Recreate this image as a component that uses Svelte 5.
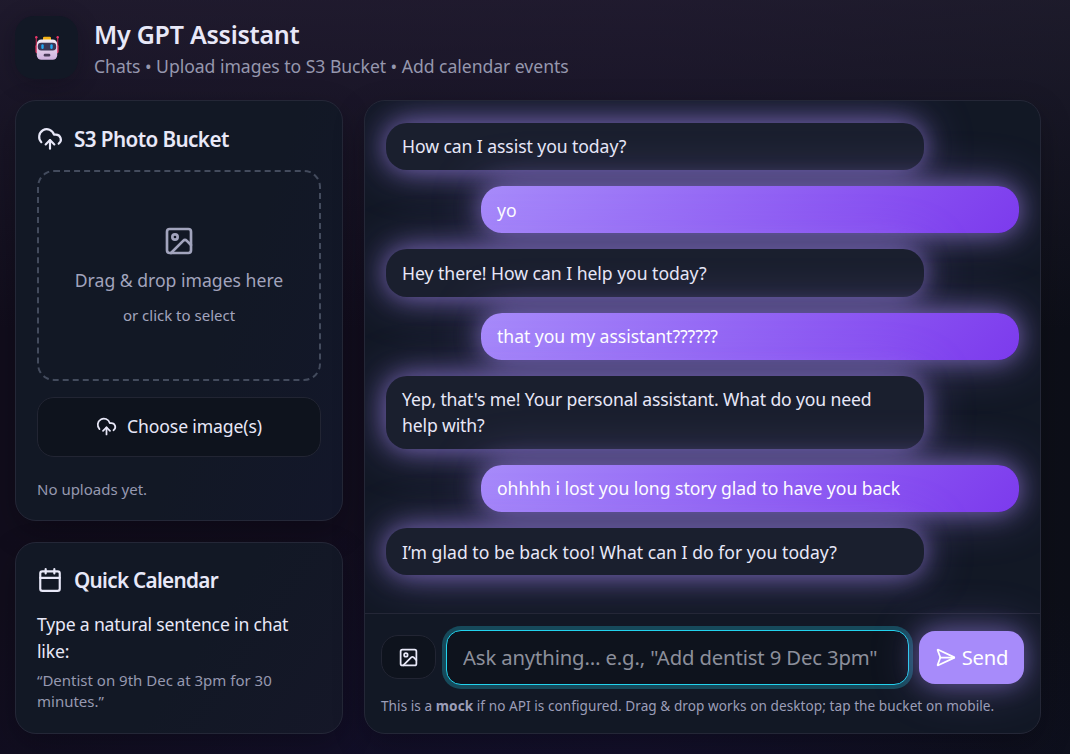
<script>
  const messages = [
    { from: 'bot', lines: ['How can I assist you today?'] },
    { from: 'me', lines: ['yo'] },
    { from: 'bot', lines: ['Hey there! How can I help you today?'] },
    { from: 'me', lines: ['that you my assistant??????'] },
    { from: 'bot', lines: ["Yep, that's me! Your personal assistant. What do you need", 'help with?'] },
    { from: 'me', lines: ['ohhhh i lost you long story glad to have you back'] },
    { from: 'bot', lines: ['I’m glad to be back too! What can I do for you today?'] }
  ];
</script>

{#snippet cloud(size)}
  <svg width={size} height={size} viewBox="0 0 24 24" class="icon">
    <path d="M12 13v8" /><path d="M4 14.899A7 7 0 1 1 15.71 8h1.79a4.5 4.5 0 0 1 2.5 8.242" /><path d="m8 17 4-4 4 4" />
  </svg>
{/snippet}
{#snippet picture(size)}
  <svg width={size} height={size} viewBox="0 0 24 24" class="icon">
    <rect width="18" height="18" x="3" y="3" rx="2" /><circle cx="9" cy="9" r="2" /><path d="m21 15-3.086-3.086a2 2 0 0 0-2.828 0L6 21" />
  </svg>
{/snippet}

<div class="app">
  <header>
    <div class="logo">
      <svg width="24" height="24" viewBox="0 0 24 24">
        <defs><linearGradient id="face" x1="0" y1="0" x2="0" y2="1"><stop offset="0" stop-color="#f2eaf4" /><stop offset="1" stop-color="#cdb0dd" /></linearGradient></defs>
        <path d="M1.3 1.5v10M22.7 1.5v10" stroke="#c42a55" stroke-width="1.1" />
        <circle cx="1.3" cy="1.3" r="1.2" fill="#e8386b" /><circle cx="22.7" cy="1.3" r="1.2" fill="#e8386b" />
        <rect x=".4" y="8.5" width="23.2" height="9" rx="2" fill="#d8345f" />
        <rect x="8" y=".8" width="8" height="4" rx="1.2" fill="#f5b316" />
        <rect x="1.8" y="3.5" width="20.4" height="20.3" rx="4.5" fill="url(#face)" />
        <rect x="2.8" y="6.8" width="18.4" height="7.6" rx="3.4" fill="#3b3655" />
        <rect x="6.3" y="8.3" width="2.4" height="4.6" rx="1.2" fill="#22a7f2" /><rect x="15.3" y="8.3" width="2.4" height="4.6" rx="1.2" fill="#22a7f2" />
        <rect x="8.7" y="17.8" width="6.6" height="2.6" rx="1.2" fill="#493c59" />
      </svg>
    </div>
    <div>
      <h1>My GPT Assistant</h1>
      <p class="sub">Chats • Upload images to S3 Bucket • Add calendar events</p>
    </div>
  </header>
  <main>
    <aside>
      <section class="card bucket">
        <h2>{@render cloud(26)}<span>S3 Photo Bucket</span></h2>
        <div class="drop">
          {@render picture(32)}
          <p class="d1">Drag &amp; drop images here</p>
          <p class="d2">or click to select</p>
        </div>
        <button class="choose">{@render cloud(21)}<span>Choose image(s)</span></button>
        <p class="none">No uploads yet.</p>
      </section>
      <section class="card cal">
        <h2>
          <svg width="26" height="26" viewBox="0 0 24 24" class="icon"><path d="M8 2v4M16 2v4M3 10h18" /><rect width="18" height="18" x="3" y="4" rx="2" /></svg>
          <span>Quick Calendar</span>
        </h2>
        <p class="c1">Type a natural sentence in chat<br />like:</p>
        <p class="c2">“Dentist on 9th Dec at 3pm for 30<br />minutes.”</p>
      </section>
    </aside>
    <section class="card chat">
      <div class="log">
        {#each messages as m}
          <div class="bubble {m.from}">{#each m.lines as line}<div>{line}</div>{/each}</div>
        {/each}
      </div>
      <footer>
        <div class="row">
          <button class="attach" aria-label="Attach">{@render picture(21)}</button>
          <input placeholder={'Ask anything… e.g., "Add dentist 9 Dec 3pm"'} />
          <button class="send">
            <svg width="21" height="21" viewBox="0 0 24 24" class="icon"><path d="M3.714 3.048a.498.498 0 0 0-.683.627l2.843 7.627a2 2 0 0 1 0 1.396l-2.842 7.627a.498.498 0 0 0 .682.627l18-8.5a.5.5 0 0 0 0-.904z" /><path d="M6 12h16" /></svg>
            <span>Send</span>
          </button>
        </div>
        <p class="note">This is a <b>mock</b> if no API is configured. Drag &amp; drop works on desktop; tap the bucket on mobile.</p>
      </footer>
    </section>
  </main>
</div>

<style>
  :global(body) { margin: 0; background: #0b0f17; }
  * { box-sizing: border-box; margin: 0; }
  .app {
    height: 754px; overflow: hidden; padding: 16px 29px 20px 15px;
    display: flex; flex-direction: column; gap: 22px;
    font-family: 'Noto Sans', 'Open Sans', sans-serif; color: #e8e8f8;
    background:
      radial-gradient(750px 300px at 50% 108%, rgba(18, 20, 70, .35), transparent 100%),
      linear-gradient(180deg, rgba(42, 36, 58, .55), rgba(34, 30, 50, .5) 100px, transparent 330px),
      linear-gradient(90deg, #110d1c, #130e20 60%, #0d0f18);
  }
  .icon { fill: none; stroke: currentColor; stroke-width: 2; stroke-linecap: round; stroke-linejoin: round; flex: none; display: block; }
  header { display: flex; gap: 16px; height: 62px; }
  .logo { width: 63px; height: 63px; border-radius: 19px; background: #121825; display: grid; place-items: center; box-shadow: 0 4px 22px rgba(10, 10, 20, .3); }
  h1 { font-size: 25px; font-weight: 650; line-height: 36px; letter-spacing: -.25px; white-space: nowrap; }
  .sub { font-size: 17.6px; line-height: 26px; margin-top: 1px; color: #9697ae; white-space: nowrap; letter-spacing: -.04px; }
  main { flex: 1; display: grid; grid-template-columns: 328px 1fr; gap: 21px; min-height: 0; }
  aside { display: flex; flex-direction: column; gap: 21px; }
  .card { border: 1px solid #242737; border-radius: 21px; background: #121825; box-shadow: 0 11px 32px rgba(0, 0, 0, .24); }
  .bucket { height: 421px; padding: 21px; background: linear-gradient(110deg, #121825 60%, #13172a); }
  .cal { flex: 1; padding: 20px 21px 21px; background: linear-gradient(125deg, #121825 55%, #151728); }
  h2 { display: flex; align-items: center; gap: 11px; font-size: 20.7px; font-weight: 650; line-height: 34px; height: 34px; letter-spacing: -.6px; white-space: nowrap; }
  .bucket h2 .icon { margin-top: -1px; }
  .cal h2 { letter-spacing: -.7px; }
  .drop { height: 211px; margin-top: 14px; border: 2px dashed #434b5d; border-radius: 17px; color: #a2a4bd; display: flex; flex-direction: column; align-items: center; padding-top: 53px; white-space: nowrap; }
  .d1 { font-size: 17.6px; line-height: 26px; margin-top: 10px; }
  .d2 { font-size: 15px; line-height: 22px; margin-top: 11px; }
  .choose { width: 100%; height: 60px; margin-top: 16px; border: 1px solid #222533; border-radius: 17px; background: #0e131d; color: inherit; font: 17.6px 'Noto Sans', sans-serif; letter-spacing: -.13px; display: flex; align-items: center; justify-content: center; gap: 10px; white-space: nowrap; padding: 0 0 2px; }
  .none { font-size: 15px; line-height: 22px; margin-top: 21px; color: #9698b0; }
  .c1 { font-size: 17.6px; line-height: 27px; margin-top: 14px; white-space: nowrap; letter-spacing: -.18px; }
  .c2 { font-size: 15px; line-height: 21px; margin-top: 5px; color: #9698b0; white-space: nowrap; }
  .chat { display: flex; flex-direction: column; overflow: hidden; }
  .log { flex: 1; padding: 22px 21px; display: flex; flex-direction: column; gap: 15.9px; overflow: hidden; }
  .bubble { width: 538px; padding: 10.4px 16px 10.8px; border-radius: 21px; font-size: 17.6px; line-height: 26.1px; letter-spacing: -.04px; white-space: nowrap; background: #1a1f2e; flex: none; box-shadow: 0 0 24px rgba(167, 139, 250, .55), 0 0 50px rgba(167, 139, 250, .4); }
  .bubble:nth-child(1) { letter-spacing: -.08px; }
  .bubble:nth-child(5) { letter-spacing: -.14px; }
  .bubble:nth-child(7) { letter-spacing: .02px; }
  .me { align-self: flex-end; color: #fff; background: linear-gradient(135deg, #a78bfa, #7c3aed); }
  footer { border-top: 1px solid #242737; height: 120px; padding: 16px; }
  .row { display: flex; align-items: center; gap: 10px; height: 55px; }
  .attach { width: 55px; height: 44px; margin-bottom: 1px; border: 1px solid #222533; border-radius: 17px; background: #0e131d; color: inherit; display: grid; place-items: center; padding: 0; }
  input { width: 463px; height: 55px; padding: 0 16px 2px; border: 1px solid #22d3ee; border-radius: 15px; background: #0e131d; color: inherit; font: 20.3px 'Noto Sans', sans-serif; letter-spacing: -.14px; box-shadow: 0 0 0 4px rgba(34, 211, 238, .27); outline: 0; }
  input::placeholder { color: #8c8f9b; opacity: 1; }
  .send { width: 105px; height: 53px; border: 0; border-radius: 16px; background: #a78bfa; color: #fff; font: 20.2px 'Noto Sans', sans-serif; letter-spacing: -.2px; display: flex; align-items: center; justify-content: center; gap: 6px; padding: 0 0 1px; box-shadow: 0 0 24px rgba(167, 139, 250, .45), 0 0 50px rgba(167, 139, 250, .3); }
  .note { font-size: 13.6px; line-height: 20px; margin-top: 11px; letter-spacing: .055px; color: #9c9eb8; white-space: nowrap; }
</style>
